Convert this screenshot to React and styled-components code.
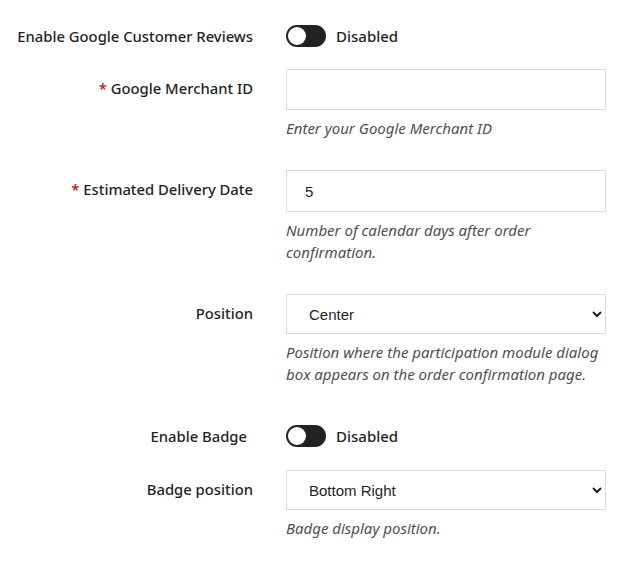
import React, { useState } from "react";
import styled, { createGlobalStyle } from "styled-components";

const GlobalStyle = createGlobalStyle`
  body {
    margin: 0;
    background: #ffffff;
    font-family: "Noto Sans", "Liberation Sans", sans-serif;
    color: #1f1f1f;
  }
`;

const positions = ["Center", "Bottom Right", "Bottom Left", "Top Right", "Top Left"];

const App = () => {
  const [reviews, setReviews] = useState(false);
  const [badge, setBadge] = useState(false);

  return (
    <>
      <GlobalStyle />
      <Form>
        <Row>
          <Label $toggle>Enable Google Customer Reviews</Label>
          <Control>
            <Switch on={reviews} onToggle={() => setReviews(!reviews)} />
          </Control>
        </Row>

        <Row>
          <Label>
            <Required>*</Required> Google Merchant ID
          </Label>
          <Control>
            <TextInput type="text" defaultValue="" />
            <Help>Enter your Google Merchant ID</Help>
          </Control>
        </Row>

        <Row>
          <Label>
            <Required>*</Required> Estimated Delivery Date
          </Label>
          <Control>
            <TextInput type="text" defaultValue="5" $tall />
            <Help>Number of calendar days after order confirmation.</Help>
          </Control>
        </Row>

        <Row>
          <Label>Position</Label>
          <Control>
            <Select defaultValue="Center">
              {positions.map((p) => (
                <option key={p}>{p}</option>
              ))}
            </Select>
            <Help>
              Position where the participation module dialog box appears on the
              order confirmation page.
            </Help>
          </Control>
        </Row>

        <Row $space={14}>
          <Label $toggle $inset>Enable Badge</Label>
          <Control>
            <Switch on={badge} onToggle={() => setBadge(!badge)} />
          </Control>
        </Row>

        <Row>
          <Label>Badge position</Label>
          <Control>
            <Select defaultValue="Bottom Right">
              {positions.map((p) => (
                <option key={p}>{p}</option>
              ))}
            </Select>
            <Help>Badge display position.</Help>
          </Control>
        </Row>
      </Form>
    </>
  );
};
export default App;

const Switch = ({ on, onToggle }) => (
  <SwitchWrap onClick={onToggle}>
    <Track $on={on}>
      <Knob $on={on} />
    </Track>
    <SwitchText>{on ? "Enabled" : "Disabled"}</SwitchText>
  </SwitchWrap>
);

const Form = styled.div`
  padding: 16px 0 20px 0;
  width: 631px;
`;

// 한 줄 (라벨 + 입력)
const Row = styled.div`
  display: grid;
  grid-template-columns: 253px 320px;
  column-gap: 33px;
  margin-bottom: ${(p) => (p.$space ? `${p.$space}px` : "13px")};
`;

const Label = styled.label`
  text-align: right;
  font-size: 14.8px;
  font-weight: 500;
  line-height: 20px;
  padding-top: ${(p) => (p.$toggle ? "10px" : "9px")};
  padding-right: ${(p) => (p.$inset ? "6px" : "0")};
  color: #1f1f1f;
  white-space: nowrap;
`;

const Required = styled.span`
  color: #b5121b;
`;

const Control = styled.div`
  display: flex;
  flex-direction: column;
`;

const TextInput = styled.input`
  box-sizing: border-box;
  width: 320px;
  height: ${(p) => (p.$tall ? "42px" : "41px")};
  border: 1px solid #dcdcdc;
  border-radius: 0;
  padding: 0 18px;
  font-family: "Liberation Sans", Arial, sans-serif;
  font-size: 15px;
  color: #1f1f1f;
  outline: none;
`;

const Select = styled.select`
  box-sizing: border-box;
  width: 320px;
  height: 40px;
  border: 1px solid #dcdcdc;
  border-radius: 0;
  padding: 0 10px 0 18px;
  background: #ffffff;
  font-family: "Liberation Sans", Arial, sans-serif;
  font-size: 15px;
  color: #1f1f1f;
  outline: none;
`;

const Help = styled.p`
  margin: 7px 0 18px 0;
  font-size: 15px;
  line-height: 22px;
  font-style: italic;
  color: #505050;
`;

// 토글
const SwitchWrap = styled.div`
  display: flex;
  align-items: center;
  gap: 10px;
  height: 40px;
  cursor: pointer;
`;

const Track = styled.div`
  position: relative;
  width: 40px;
  height: 22px;
  border-radius: 11px;
  background: ${(p) => (p.$on ? "#1a7f37" : "#222222")};
`;

const Knob = styled.div`
  position: absolute;
  top: 2px;
  left: ${(p) => (p.$on ? "20px" : "2px")};
  width: 18px;
  height: 18px;
  border-radius: 50%;
  background: #ffffff;
`;

const SwitchText = styled.span`
  font-size: 15px;
  font-weight: 500;
  color: #1f1f1f;
`;
